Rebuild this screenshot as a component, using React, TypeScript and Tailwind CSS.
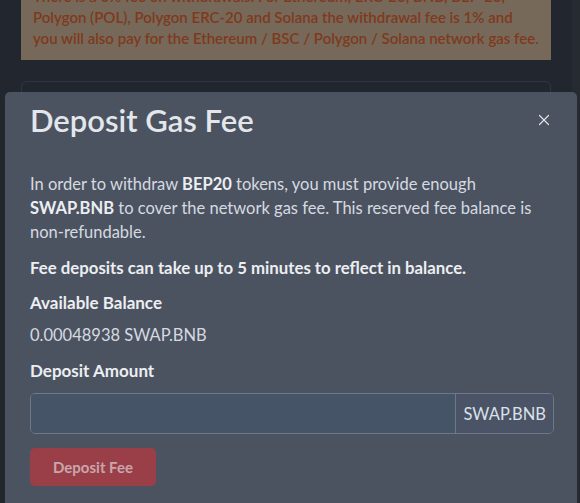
import { X } from 'lucide-react';

export default function App() {
  return (
    <div
      className="relative h-[503px] w-full overflow-hidden bg-[#22262e]"
      style={{ fontFamily: 'Lato, "Noto Sans", sans-serif' }}
    >
      {/* Page content behind the modal */}
      <div className="flex h-full">
        <div className="flex-1 px-[21px]">
          <div className="-mt-[16px] bg-[#76695a] px-[12px] pb-[11px] pt-[2px] text-[15px] font-semibold leading-[21px] text-[#7f391d]">
            There is a 0% fee on withdrawals. For Ethereum, ERC-20, BNB, BEP-20,
            Polygon (POL), Polygon ERC-20 and Solana the withdrawal fee is 1% and
            you will also pay for the Ethereum / BSC / Polygon / Solana network gas fee.
          </div>
          <div className="mt-[21px] h-[200px] rounded-[6px] border border-[#30363f]" />
        </div>
        <div className="w-[8px] bg-[#262b32]" />
      </div>

      {/* Modal */}
      <div className="absolute bottom-0 left-[5px] top-[92px] w-[572px] rounded-t-[5px] bg-[#4b5361]">
        <div className="flex h-[56px] items-center justify-between pl-[25px] pr-[24px]">
          <h2 className="text-[31px] font-semibold text-[#e3e6ea]">Deposit Gas Fee</h2>
          <X className="h-[18px] w-[18px] text-[#dfe3e8]" strokeWidth={1.6} />
        </div>

        <div className="pl-[25px] pr-[23px] pt-[24px] text-[16.5px] leading-[24px] text-[#d6dae0]">
          <p>
            In order to withdraw <b className="font-bold text-[#eceef1]">BEP20</b> tokens, you must provide enough{' '}
            <b className="font-bold text-[#eceef1]">SWAP.BNB</b> to cover the network gas fee. This reserved fee
            balance is non-refundable.
          </p>
          <p className="mt-[12px] text-[16.8px] font-bold text-[#eceef1]">
            Fee deposits can take up to 5 minutes to reflect in balance.
          </p>
          <div className="mt-[11px] text-[17px] font-bold text-[#eceef1]">Available Balance</div>
          <div className="mt-[8px]">0.00048938 SWAP.BNB</div>
          <div className="mt-[12px] text-[17px] font-bold text-[#eceef1]">Deposit Amount</div>

          <div className="mt-[10px] flex h-[41px] overflow-hidden rounded-[5px] border border-[#6d7888]">
            <input className="min-w-0 flex-1 bg-[#465468] outline-none" />
            <div className="flex items-center border-l border-[#6d7888] bg-[#4a5466] px-[7px] text-[#dbe1ea]">
              SWAP.BNB
            </div>
          </div>

          <button className="mt-[14px] h-[38px] w-[126px] rounded-[5px] bg-[#9a3f47] text-[15px] font-bold text-[#c9a6ac]">
            Deposit Fee
          </button>
        </div>
      </div>
    </div>
  );
}
